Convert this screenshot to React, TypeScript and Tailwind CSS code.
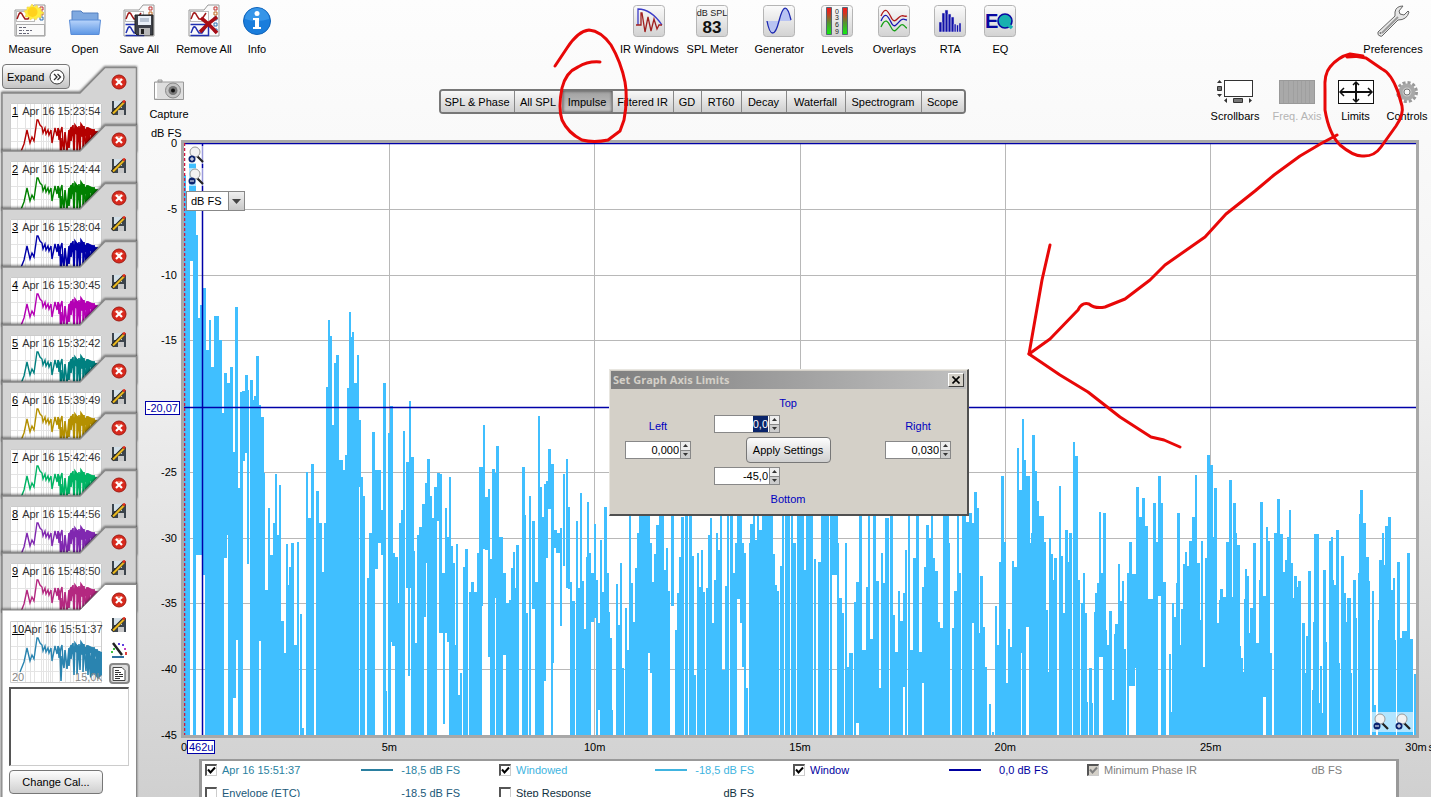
import React, { useEffect, useRef, useState } from 'react';

interface ToolItem {
  label: string;
  icon: React.ReactNode;
  width: string;
  disabled?: boolean;
}

interface Measurement {
  id: number;
  time: string;
  color: string;
  height: string;
}

interface Trace {
  label: string;
  color: string;
  line: string;
  value: string;
  checked: boolean;
  disabled?: boolean;
}

/* ---------- icons ---------- */

const TracePage: React.FC<{ children?: React.ReactNode; rows?: boolean }> = ({ children, rows }) => (
  <svg width="34" height="34" viewBox="0 0 34 34" fill="none">
    <path d="M2 6H17L21 1H32V32H2Z" fill="#fafafa" stroke="#999" />
    <rect x="3.500" y="7.500" width="18" height="10" fill="#fff" stroke="#bbb" />
    <path d="M4 15l2-5q2-3 4 2l2 3 3 0 4-6" stroke="#a01818" strokeWidth="1.500" />
    {rows ? (
      <>
        <path d="M3.500 20.500h28v11h-28z" stroke="#aaa" />
        <path d="M6 23.500h7M6 26.500h5M13 26.500h6M6 29.500h10" stroke="#667" strokeDasharray="3 1" />
      </>
    ) : (
      <path d="M3.500 20.500h18v11h-18M4 29l2-5q2-3 4 2l2 3 3 0 4-6" stroke="#2030b0" strokeWidth="1.500" />
    )}
    <path d="M27 3h3v3h-3z" stroke="#c03030" />
    <path d="M27 8h3v3h-3z" stroke="#c06820" />
    <path d="M27 13h3v3h-3z" stroke="#3070b0" />
    {!rows && <path d="M27 19h3v3h-3zM27 25h3v3h-3z" stroke="#3070b0" />}
    {children}
  </svg>
);

const MeasureIcon = () => (
  <TracePage rows>
    <path
      d="M19 0l2 3 3-2 1 3 3 0 0 3 3 2-3 1 0 4-3-1-2 3-3-2-3 2-1-3-4 0 1-3-2-3 3-1 0-3 3 0z"
      fill="#ffee40"
      stroke="#f0d050"
      strokeWidth="0.600"
    />
    <circle cx="19.500" cy="8" r="5" fill="#ffd21c" />
  </TracePage>
);

const SaveAllIcon = () => (
  <TracePage>
    <path d="M13 11h18v20H15l-2-2z" fill="#3d4048" stroke="#222" />
    <path d="M16 12h13v9H16z" fill="#eaf0f8" />
    <path d="M18 15h9M18 17h9" stroke="#8a9ab0" />
    <path d="M17 24h11v7H17z" fill="#b8b8b8" />
    <path d="M19 25h3v5h-3z" fill="#222" />
  </TracePage>
);

const RemoveAllIcon = () => (
  <TracePage>
    <path d="M14 14q7 5 16 15M30 13q-9 6-17 15" stroke="#a80c14" strokeWidth="3.500" />
  </TracePage>
);

const FolderIcon = () => (
  <svg width="34" height="34" viewBox="0 0 34 34">
    <defs>
      <linearGradient id="folder" x1="0" y1="0" x2="0" y2="1">
        <stop offset="0" stopColor="#b8d4fb" />
        <stop offset="1" stopColor="#5c96e4" />
      </linearGradient>
    </defs>
    <path d="M4 20V7h9l2 2h15v11z" fill="#7fa9e0" stroke="#5580c0" />
    <path d="M1.500 16h31L31 30.500H3z" fill="url(#folder)" stroke="#5a8dd8" />
  </svg>
);

const InfoIcon = () => (
  <svg width="34" height="34" viewBox="0 0 34 34">
    <circle cx="17" cy="17" r="13.500" fill="#1a7ddc" stroke="#0f62b8" />
    <path d="M5 15a12 11 0 0 1 24 0q-12 4-24 0" fill="#4aa5f0" opacity="0.600" />
    <circle cx="17" cy="9.500" r="2.500" fill="#fff" />
    <path d="M13 14h6v9h2v2h-8v-2h2v-7h-2z" fill="#fff" />
  </svg>
);

const Tile: React.FC<{ children: React.ReactNode }> = ({ children }) => (
  <svg width="34" height="34" viewBox="0 0 34 34" fill="none">
    <defs>
      <linearGradient id="tile" x1="0" y1="0" x2="0" y2="1">
        <stop offset="0" stopColor="#fbfbfb" />
        <stop offset="1" stopColor="#d2d2d2" />
      </linearGradient>
    </defs>
    <rect x="1.500" y="1.500" width="31" height="31" rx="3" fill="url(#tile)" stroke="#b5b5b5" />
    {children}
  </svg>
);

const WindowsIcon = () => (
  <Tile>
    <path d="M6 21V5q13 0 24 16" stroke="#3c3cc8" strokeWidth="1.300" />
    <path d="M4 21h5V9h1l3 19 3-15 3 14 3-12 3 10 2-4h3" stroke="#a02020" strokeWidth="1.300" />
  </Tile>
);

const SplIcon = () => (
  <Tile>
    <text x="17" y="12" textAnchor="middle" fontSize="9" fill="#222" fontFamily="Liberation Sans, sans-serif">
      dB SPL
    </text>
    <text x="17" y="29" textAnchor="middle" fontSize="17" fontWeight="bold" fill="#111" fontFamily="Liberation Sans, sans-serif">
      83
    </text>
  </Tile>
);

const GeneratorIcon = () => (
  <Tile>
    <path d="M5 17c3 16 8 16 12 0z M17 17C21 0 26 0 29 17z" fill="#b9c4f2" />
    <path d="M5 17c3 16 8 16 12 0s8-18 12-1" stroke="#1c28b0" strokeWidth="1.300" />
  </Tile>
);

const LevelsIcon = () => (
  <Tile>
    <defs>
      <linearGradient id="level" x1="0" y1="0" x2="0" y2="1">
        <stop offset="0" stopColor="#f81818" />
        <stop offset="0.200" stopColor="#d83020" />
        <stop offset="0.550" stopColor="#589030" />
        <stop offset="1" stopColor="#10f010" />
      </linearGradient>
    </defs>
    <path d="M6.500 3.500h5v27h-5zM22.500 3.500h5v27h-5z" fill="url(#level)" stroke="#567" />
    <g fontSize="7" fill="#222" fontFamily="Liberation Sans, sans-serif">
      <text x="15" y="10">0</text>
      <text x="15" y="16">3</text>
      <text x="15" y="23">6</text>
      <text x="15" y="30">9</text>
    </g>
  </Tile>
);

const OverlaysIcon = () => (
  <Tile>
    <g strokeWidth="1.300">
      <path d="M4 12c5-12 8-2 11 3s6-2 9-3 4 1 6 0" stroke="#b01818" />
      <path d="M4 17c5-12 8-2 11 3s6-2 9-4 4 0 6 0" stroke="#1818b0" />
      <path d="M4 23c5-12 8-3 11 2s6-2 9-4 4 3 6 3" stroke="#18a018" />
    </g>
  </Tile>
);

const RtaIcon = () => (
  <Tile>
    <path
      d="M6 28V18h3v10zM9 28V9h3v19zM12 28V6h3v22zM15 28V10h3v18zM18 28V13h3v15zM21 28V20h2v8zM23.500 28V21h2v7zM26 28V19h2v9z"
      fill="#1010a8"
      stroke="#dde"
      strokeWidth="0.500"
    />
  </Tile>
);

const EqIcon = () => (
  <Tile>
    <text x="2" y="24" fontSize="20" fontWeight="bold" fill="#0808a0" fontFamily="Liberation Sans, sans-serif">
      E
    </text>
    <circle cx="22" cy="17" r="7" fill="#18b0b0" stroke="#0808a0" strokeWidth="1.600" />
    <path d="M22 18l7 6" stroke="#18b0b0" strokeWidth="3.500" />
  </Tile>
);

const WrenchIcon = () => (
  <svg width="34" height="34" viewBox="0 0 34 34">
    <path
      d="M27 2q-7 0-8 6v4L2 28q-1 3 2 4 2 1 3-1L22 16q9 0 11-8l-1-1-4 4-4-1-1-3z"
      fill="#e6e6e6"
      stroke="#666"
    />
    <path d="M6 29L22 13" stroke="#999" strokeWidth="2" />
    <circle cx="4.500" cy="29" r="1" fill="#777" />
  </svg>
);

const CameraIcon = () => (
  <svg width="32" height="24" viewBox="0 0 32 24">
    <path d="M5 2h4v2H5zM1.500 4h29v17.500h-29z" fill="#dedede" stroke="#999" />
    <path d="M3 5v15" stroke="#fff" strokeWidth="2" />
    <circle cx="20" cy="12.500" r="7.500" fill="#c4c4c4" stroke="#888" />
    <circle cx="20" cy="12.500" r="4.500" fill="#777" />
    <circle cx="20" cy="12.500" r="2" fill="#111" />
  </svg>
);

const ScrollbarsIcon = () => (
  <svg width="36" height="24" viewBox="0 0 36 24">
    <rect x="7.500" y="0.500" width="28" height="16" fill="#fff" stroke="#333" />
    <path d="M0 3h5L2.500 0zM0 14h5l-2.500 3zM10 18v5l-3-2.500zM32 18v5l3-2.500z" fill="#333" />
    <path d="M.5 6.500h4v4h-4zM16.500 18.500h9v4h-9z" fill="#777" stroke="#333" />
  </svg>
);

const FreqAxisIcon = () => (
  <svg width="36" height="24" viewBox="0 0 36 24">
    <rect x="0.500" y="0.500" width="35" height="23" fill="#a9a9a9" stroke="#999" />
    <path d="M4.500 1v22M9.500 1v22M14.500 1v22M18.500 1v22M22.500 1v22M26.500 1v22M30.500 1v22" stroke="#9f9f9f" />
  </svg>
);

const LimitsIcon = () => (
  <svg width="36" height="24" viewBox="0 0 36 24" fill="none" stroke="#111">
    <rect x="0.500" y="0.500" width="35" height="23" fill="#fff" />
    <path d="M2 12h32M18 2v20" strokeWidth="2" />
    <path d="M6 8l-4 4 4 4M30 8l4 4-4 4M15 5l3-3 3 3M15 19l3 3 3-3" strokeWidth="1.500" />
  </svg>
);

const GearIcon = () => (
  <svg width="24" height="24" viewBox="0 0 24 24" fill="none">
    <circle cx="12" cy="12" r="9.500" stroke="#999" strokeWidth="3" strokeDasharray="3 2" />
    <circle cx="12" cy="12" r="6.500" fill="#c8c8c8" stroke="#a8a8a8" strokeWidth="4" />
    <circle cx="12" cy="12" r="3" fill="#f8f8f8" stroke="#777" />
  </svg>
);

const CloseIcon = () => (
  <svg width="16" height="16" viewBox="0 0 16 16">
    <circle cx="8" cy="8" r="7" fill="#d8281c" stroke="#a01c14" />
    <path d="M3 6a6 5 0 0 1 10 0q-5 2-10 0" fill="#f08870" opacity="0.700" />
    <path d="M5 5l6 6M11 5l-6 6" stroke="#fff" strokeWidth="2.200" />
  </svg>
);

const DiskPenIcon = () => (
  <svg width="16" height="16" viewBox="0 0 16 16">
    <path d="M1 1h14v14H3l-2-2z" fill="#3c444c" />
    <path d="M3 1h8v7H3z" fill="#d4e0e8" />
    <path d="M7 10h6v5H7z" fill="#c8c8c8" />
    <path d="M1 14L13 2" stroke="#222" strokeWidth="3.500" />
    <path d="M2 13.500L13 2.500" stroke="#e8b820" strokeWidth="2.200" />
    <path d="M12 2.500l2-2" stroke="#e03020" strokeWidth="2.500" />
  </svg>
);

const ColorPenIcon = () => (
  <svg width="16" height="16" viewBox="0 0 16 16" fill="none">
    <path d="M1 15h12" stroke="#3070a0" strokeWidth="2" />
    <path d="M2 1l9 12" stroke="#222" strokeWidth="2.500" />
    <path d="M1 9v2M3 6v2" stroke="#40c040" strokeWidth="2" />
    <path d="M7 2h2M11 3h2" stroke="#6040e0" strokeWidth="2" />
    <path d="M14 6v2" stroke="#c040c0" strokeWidth="2" />
    <path d="M15 10v3" stroke="#e04040" strokeWidth="2" />
  </svg>
);

const NotesIcon = () => (
  <svg width="14" height="14" viewBox="0 0 14 14" fill="none">
    <path d="M1 .5h9l3 3v10H1z" fill="#fff" stroke="#444" />
    <path d="M3 3.500h4M3 5.500h6M3 7.500h3M7 7.500h4M3 9.500h8M3 11.500h5" stroke="#333" />
  </svg>
);

const Magnifier: React.FC<{ plus?: boolean }> = ({ plus }) => (
  <svg width="18" height="18" viewBox="0 0 18 18">
    <path d="M10 10l6 6" stroke="#222" strokeWidth="2.200" />
    <circle cx="8" cy="6" r="5" fill="#f2f2f2" stroke="#999" />
    <circle cx="5" cy="13" r="3.500" fill="#0c2470" />
    <path d={plus ? 'M3 13h4M5 11v4' : 'M3 13h4'} stroke="#fff" />
  </svg>
);

/* ---------- data ---------- */

const FILE_TOOLS: ToolItem[] = [
  { label: 'Measure', icon: <MeasureIcon />, width: 'w-[60px]' },
  { label: 'Open', icon: <FolderIcon />, width: 'w-[50px]' },
  { label: 'Save All', icon: <SaveAllIcon />, width: 'w-[58px]' },
  { label: 'Remove All', icon: <RemoveAllIcon />, width: 'w-[72px]' },
  { label: 'Info', icon: <InfoIcon />, width: 'w-[34px]' },
];

const WINDOW_TOOLS: ToolItem[] = [
  { label: 'IR Windows', icon: <WindowsIcon />, width: 'w-[66px]' },
  { label: 'SPL Meter', icon: <SplIcon />, width: 'w-[60px]' },
  { label: 'Generator', icon: <GeneratorIcon />, width: 'w-[74px]' },
  { label: 'Levels', icon: <LevelsIcon />, width: 'w-[42px]' },
  { label: 'Overlays', icon: <OverlaysIcon />, width: 'w-[72px]' },
  { label: 'RTA', icon: <RtaIcon />, width: 'w-[40px]' },
  { label: 'EQ', icon: <EqIcon />, width: 'w-[60px]' },
];

const GRAPH_TOOLS: ToolItem[] = [
  { label: 'Scrollbars', icon: <ScrollbarsIcon />, width: 'w-[62px]' },
  { label: 'Freq. Axis', icon: <FreqAxisIcon />, width: 'w-[62px]', disabled: true },
  { label: 'Limits', icon: <LimitsIcon />, width: 'w-[55px]' },
  { label: 'Controls', icon: <GearIcon />, width: 'w-[48px]' },
];

const GRAPH_TABS = [
  { name: 'SPL & Phase', width: 'w-[74px]' },
  { name: 'All SPL', width: 'w-[48px]' },
  { name: 'Impulse', width: 'w-[50px]' },
  { name: 'Filtered IR', width: 'w-[61px]' },
  { name: 'GD', width: 'w-[28px]' },
  { name: 'RT60', width: 'w-[40px]' },
  { name: 'Decay', width: 'w-[45px]' },
  { name: 'Waterfall', width: 'w-[59px]' },
  { name: 'Spectrogram', width: 'w-[76px]' },
  { name: 'Scope', width: 'w-[42px]' },
];

const MEASUREMENTS: Measurement[] = [
  { id: 1, time: '15:23:54', color: '#b40000', height: 'h-[58px]' },
  { id: 2, time: '15:24:44', color: '#008000', height: 'h-[58px]' },
  { id: 3, time: '15:28:04', color: '#0000a8', height: 'h-[58px]' },
  { id: 4, time: '15:30:45', color: '#b400b4', height: 'h-[58px]' },
  { id: 5, time: '15:32:42', color: '#008080', height: 'h-[57px]' },
  { id: 6, time: '15:39:49', color: '#b49000', height: 'h-[57px]' },
  { id: 7, time: '15:42:46', color: '#00b464', height: 'h-[57px]' },
  { id: 8, time: '15:44:56', color: '#8028b0', height: 'h-[57px]' },
  { id: 9, time: '15:48:50', color: '#b42880', height: 'h-[57px]' },
];

const TRACES: Trace[] = [
  { label: 'Apr 16 15:51:37', color: 'text-[#2a7fa0]', line: 'bg-[#2a7fa0]', value: '-18,5 dB FS', checked: true },
  { label: 'Windowed', color: 'text-[#40b4e0]', line: 'bg-[#40b4e0]', value: '-18,5 dB FS', checked: true },
  { label: 'Window', color: 'text-[#0000a0]', line: 'bg-[#0000a0]', value: '0,0 dB FS', checked: true },
  { label: 'Minimum Phase IR', color: 'text-[#808080]', line: '', value: 'dB FS', checked: true, disabled: true },
  { label: 'Envelope (ETC)', color: 'text-[#205878]', line: '', value: '-18,5 dB FS', checked: false },
  { label: 'Step Response', color: 'text-[#103040]', line: '', value: 'dB FS', checked: false },
];

// Impulse response bars: x, width, top and (optionally) bottom, on a 1232 x 592 plot
const IMPULSE = `
0 2 32;2 4 48;5 5 20 118;9 3 20;11 3 92 412;14 2 175 412;16 2 162 412;19 3 145 432;21 4 207;25 2 177;27 3 224;30 5 173;35 3 197;38 2 270;40 3 230 415;
43 2 240 392;44 3 240;46 3 224;49 3 309 555;51 3 164 497;54 3 345;56 3 249;58 3 248 318;61 3 232 310;63 2 247 421;66 3 237;68 3 257;70 3 253 592;
72 3 213;75 2 262 498;77 3 274;79 2 330;81 3 447;84 2 365;86 3 412;89 2 380;91 2 331;93 2 392;95 2 342;97 3 478;100 2 510;102 2 401;104 2 442;
105 2 424;107 3 400;110 3 502;113 2 399;116 2 471;118 2 585;122 2 329;124 3 375;127 3 321;132 3 348;135 3 380;138 2 429;140 2 380;142 2 244;
144 2 177;146 2 193;148 2 282;150 2 220;152 3 212;155 4 317;159 2 327;161 3 312;163 2 245;165 2 169;167 2 194;168 2 189;170 3 240;173 2 212;
175 2 277 344;176 3 334;179 2 353;183 3 435;185 3 390;188 3 289;191 3 327 426;194 3 327 400;197 2 367 412;199 3 240;201 2 548;204 3 290;
206 3 263 499;208 3 410 503;211 3 414;213 2 460;215 3 380;217 2 367;219 2 288;222 2 319 445;224 2 319 533;225 2 258 445;227 3 314;229 2 408;
231 2 500;233 2 392;235 3 384;238 2 361;239 3 361 474;241 2 340 420;243 3 316;246 2 353;248 3 375;250 3 344;253 3 330 378;255 3 331 490;
257 3 430 490;259 2 430 581;261 2 365 490;263 2 394 499;265 2 334;267 2 403;269 2 420;271 1 502;272 2 401;274 2 552;276 2 530;279 2 424;
281 3 406;285 2 449;287 3 439;290 3 449;293 2 410;295 3 324;297 2 324 463;299 2 282 406;301 3 354 407;304 2 346 514;306 2 416;308 3 326;
310 2 330 455;312 3 303;315 4 394;319 3 430 512;322 3 460;325 2 457;327 2 425;329 2 409;330 2 445;332 3 402;338 3 324;340 2 372;342 2 470;
345 2 353;348 3 378 466;351 3 439;354 2 273;356 2 344;358 2 374;360 2 341 538;362 2 338 415;364 3 306 366;367 2 321;368 2 321 520;370 3 387 405;
372 4 390 410;376 2 385 483;379 2 331 423;382 2 316 445;384 2 364 446;386 2 439;388 3 458;392 2 378;394 2 445;396 2 350;398 2 438;400 2 486;
402 2 414;403 2 359;405 2 410;407 3 430 479;410 2 381 475;412 2 437;414 2 480 567;416 2 397;418 2 449;420 3 364;423 2 430;424 2 469;
426 2 495;428 1 567;432 2 441;434 2 482;436 2 420;438 2 525;441 2 465;443 2 507;445 2 372;
447 2 440;449 2 479;451 2 425;453 2 390;455 9 366;464 2 366 510;466 2 400 530;468 2 439;470 2 411;472 3 382;475 5 373;480 2 427;482 2 405;
484 2 448;487 3 372 463;491 2 487;493 2 450;495 2 414;497 3 374;501 3 373;505 3 373;508 2 413;510 2 532;513 2 410;515 2 444;517 2 407;519 2 449;
522 2 445;524 2 392;526 2 375;528 2 480;530 2 437;532 2 390;534 2 407;536 2 373;538 3 527;541 2 443;543 2 373;546 3 373;549 2 430;551 2 400;
553 3 373 456;556 2 373 480;558 2 400 524;560 2 410;562 2 545;565 2 400;566 3 381;569 2 373;571 2 397;573 2 373;575 3 387;578 11 373;589 2 411;
591 2 442;593 2 448;596 2 423;598 2 373;601 5 373;607 2 373;609 3 400;613 7 373;620 2 427;622 7 373;630 2 416;634 3 419;637 2 373;639 6 373;
646 2 373;648 6 373 432;653 2 400;655 3 455;658 2 470;661 2 400;663 2 524;665 4 510;670 2 459;672 3 439 580;675 3 373;678 4 507;682 2 444;
684 2 373;686 3 496;689 3 373;692 3 438;695 2 545;697 2 410;699 2 440;701 4 375;706 3 373;709 2 472;711 3 509;714 2 448;716 3 478;719 2 450 544;
721 2 407;724 2 373;726 3 507;729 3 415;732 3 373;735 3 509;738 3 444 540;740 2 424;742 3 382;745 2 395;747 2 373;749 2 415;751 3 428;754 2 479;
756 3 485;759 6 373;764 2 400;768 2 485;770 3 448;773 2 373;775 2 430;778 4 373;782 3 379;785 3 370;788 2 380 480;790 3 349;793 2 365;795 2 490;
796 3 433;799 2 484;801 2 524;805 2 561;808 2 589;811 2 463;813 2 502;815 2 419;817 3 333;820 2 399;822 2 540;824 2 486;826 2 504;828 2 418;
830 3 424;833 2 305;835 2 347;836 3 347 510;838 2 276;840 2 317;842 4 333 484;845 2 400;847 2 390;848 3 292;851 2 328;853 2 358;855 5 373;
860 2 399;862 2 467;864 1 529;865 2 395;867 2 411;869 2 437;870 3 415;875 2 343;877 2 413;879 3 470;881 3 387;884 2 419;885 3 390;889 2 299;
891 3 313;894 2 437;897 2 460;899 2 430;901 2 470;903 1 559;905 3 525;908 1 560;910 2 469;911 2 450;913 2 440;915 2 369 514;917 2 430 514;
919 3 370;922 1 487;923 2 502;925 3 468;928 2 557;930 2 491;931 3 481;934 2 421;936 2 458;938 2 438;940 2 506;943 2 430;945 3 399 543;947 4 431 543;
950 3 431 525;952 3 344;955 3 374;958 3 355;961 3 383;964 5 456;969 3 360;972 2 399;974 3 333 453;977 2 360;978 4 439;985 2 511;987 1 569;
988 2 460;990 2 474;992 1 440;993 3 370;996 1 502;997 2 466;999 2 421;1001 2 409;1003 2 423;1005 3 398;1008 3 374;1011 2 332;1013 3 420;
1016 1 477;1017 2 398;1019 2 524;1021 2 415;1023 3 312;1026 3 322;1029 1 394;1030 3 345;1033 2 480;1035 1 457;1036 3 446;1039 3 454;1042 3 399;
1045 3 337;1048 1 454;1049 3 360;1052 1 390;1053 3 402;1056 1 503;1057 2 515;1059 1 529;1060 2 456;1061 2 426;1063 2 433;1065 1 490;1066 3 465;
1069 3 400;1072 3 500;1075 1 437;1076 3 359;1079 3 453 554;1082 2 384;1084 2 398;1086 2 510;1090 3 390;1093 3 356;1096 3 391;1099 2 429;
1101 2 417;1103 2 394;1105 2 367;1107 2 420;1109 1 455;1110 3 433;1113 1 444;1114 3 438;1118 3 480;1121 1 530;1122 2 493;1124 3 428;1128 1 547;
1129 1 479;1130 5 391;1135 1 560;1136 2 523;1138 1 570;1139 3 427;1142 1 499;1145 2 398;1147 2 394;1149 1 437;1150 2 442;1152 3 387;1155 1 520;
1157 3 413;1160 2 450;1162 1 479;1163 4 455;1167 1 530;1169 3 437;1172 1 475;1174 1 430;1175 2 371;1176 3 347;1179 3 380;1182 3 414;1185 1 438;
1188 2 448;1190 2 562;1194 1 477;1195 3 417;1198 2 390;1200 1 422;1201 3 383;1204 3 374;1207 2 447;1209 2 435;1211 1 497;1213 3 419;1216 2 495;
1218 5 488;1223 3 410;1226 3 496;1230 2 531`;

const impulsePath = IMPULSE.trim()
  .split(';')
  .map((bar) => {
    const [x, w, top, bottom = 592] = bar.trim().split(/\s+/).map(Number);
    return `M${x} ${top}h${w}V${bottom}h-${w}z`;
  })
  .join('');

/* ---------- components ---------- */

const ToolButton: React.FC<{ item: ToolItem; box?: string }> = ({ item, box = 'h-8' }) => (
  <button
    disabled={item.disabled}
    className={`${item.width} flex shrink-0 flex-col items-center gap-1 whitespace-nowrap disabled:text-[#b4b4b4]`}
  >
    <span className={`${box} flex items-center`}>{item.icon}</span>
    <span className="leading-4">{item.label}</span>
  </button>
);

const Thumbnail: React.FC<{ color: string }> = ({ color }) => (
  <svg className="absolute inset-0" width="92" height="62" viewBox="0 0 92 62" fill="none">
    <path d="M0 0h92v62H0z" fill="#fff" />
    <path d="M7.500 0v62M15.500 0v62M20.500 0v62M24.500 0v62M31.500 0v62M33.500 0v62M36.500 0v62M38.500 0v62M40.500 0v62M42.500 0v62M49.500 0v62M55.500 0v62M60.500 0v62M63.500 0v62M66.500 0v62M75.500 0v62M83.500 0v62M0 25.500h92M0 38.500h92M0 50.500h92" stroke="#e4e4e4" />
    <path d="M.5.5h91v61H.5z" stroke="#ccc" />
    <path
      d="M10 51l4-10 3-14 3 13 2-6 2 4 3-21 1 0 2 5 2 2 1 6 2-5 1 6 2-4 1 5 2-5 1 13 2-10 1-5 2 8 1-8 1 12 2-10 1-3 1 16"
      stroke={color}
      strokeWidth="1.400"
    />
    <path
      d="M48 25l2 5 1 30 1-25 2 12 1-18 2 19 2-21 0 18 2-21 0 14 2-16 1 32 1-32 2 3 0 28 2-30 1 26 1-28 2 3 0 27 1-28 2 27 1-26 1 30 1-29 2 22 1-21 1 26 1-26 2 28 1-26 1 28 1-26"
      stroke={color}
      strokeWidth="1.600"
    />
    <path d="M59 27l3-4 2 3 2-3 3 2 3-2 3 3 3-2 6 3 5 3 3 1v8l-5-2-6-5-9 2-7-3z" fill={color} />
    <path d="M78 38h14v16l-4 4-4-5-4 4z" fill={color} />
  </svg>
);

const MeasurementTab: React.FC<{ item: Measurement }> = ({ item }) => (
  <li className={`relative ${item.height}`}>
    <svg className="absolute inset-0 drop-shadow-[0_-1px_1px_rgba(0,0,0,0.5)]" width="137" height="86" viewBox="0 0 137 86">
      <path d="M2 86V26H80L105 .5H136.500V86z" fill="#d4d4d4" stroke="#888" strokeWidth="1.500" />
    </svg>
    <div className="relative flex h-[84px] items-start pl-[10px]">
      <div className="relative mt-9 h-12 w-[92px] overflow-hidden">
        <Thumbnail color={item.color} />
        <div className="relative flex gap-1 pl-[2px] text-[#333]">
          <span className="text-black underline">{item.id}</span>
          <span className="whitespace-nowrap">Apr 16 {item.time}</span>
        </div>
      </div>
      <div className="flex flex-1 flex-col items-center gap-[10px] pt-[7px] pr-[2px]">
        <button aria-label={`Delete measurement ${item.id}`}><CloseIcon /></button>
        <button aria-label={`Save measurement ${item.id}`}><DiskPenIcon /></button>
      </div>
    </div>
  </li>
);

const ActiveMeasurement = () => (
  <section className="relative flex-1">
    <svg className="absolute inset-x-0 top-0 drop-shadow-[0_-1px_1px_rgba(0,0,0,0.5)]" width="137" height="900" viewBox="0 0 137 900">
      <path d="M2 900V26H80L105 .5H136.500V900z" fill="#fff" stroke="#888" />
    </svg>
    <div className="relative flex items-start pl-[10px]">
      <div className="relative mt-[37px] h-[62px] w-[92px]">
        <Thumbnail color="#2a84b0" />
        <div className="relative flex h-full flex-col justify-between pl-[2px] text-[#333]">
          <div className="whitespace-nowrap"><span className="text-black underline">10</span>Apr 16 15:51:37</div>
          <div className="flex justify-between leading-3 text-[#888]"><span>20</span><span>15,0k</span></div>
        </div>
      </div>
      <div className="flex flex-1 flex-col items-center gap-[9px] pt-[8px] pr-[2px]">
        <button aria-label="Delete measurement 10"><CloseIcon /></button>
        <button aria-label="Save measurement 10"><DiskPenIcon /></button>
        <button aria-label="Trace colour"><ColorPenIcon /></button>
        <button aria-label="Notes" className="-mt-1 flex h-[21px] w-[21px] items-center justify-center rounded border-2 border-[#888] bg-[#ddd]">
          <NotesIcon />
        </button>
      </div>
    </div>
    <div className="relative flex flex-col items-start gap-1 pt-[3px] pl-[9px]">
      <textarea
        aria-label="Measurement notes"
        className="h-[79px] w-[120px] resize-none border-t-2 border-r border-b border-l-2 border-t-[#555] border-r-[#ccc] border-b-[#ccc] border-l-[#555] bg-white"
      />
      <button className="h-6 w-[94px] rounded border border-[#777] bg-linear-to-b from-[#fdfdfd] to-[#cfcfcf]">Change Cal...</button>
    </div>
  </section>
);

const Spinner: React.FC<{ label: string; initial: string; selected?: boolean }> = ({ label, initial, selected }) => {
  const [value, setValue] = useState(initial);
  const ref = useRef<HTMLInputElement>(null);

  useEffect(() => {
    if (selected && ref.current) {
      ref.current.focus();
      ref.current.select();
    }
  }, [selected]);

  return (
    <span className="flex h-[18px] w-[66px] border border-[#888] bg-white text-black">
      <input
        ref={ref}
        aria-label={label}
        value={value}
        onChange={(e) => setValue(e.target.value)}
        className="w-0 flex-1 pr-[1px] text-right outline-none selection:bg-[#0a246a] selection:text-white"
      />
      <span className="flex w-[10px] flex-col border-l border-[#888]">
        <button aria-label={`${label} up`} className="flex flex-1 items-center justify-center border-b border-[#888] bg-[#eee]">
          <svg width="5" height="3" viewBox="0 0 5 3"><path d="M0 3h5L2.500 0z" fill="#333" /></svg>
        </button>
        <button aria-label={`${label} down`} className="flex flex-1 items-center justify-center bg-[#ccc]">
          <svg width="5" height="3" viewBox="0 0 5 3"><path d="M0 0h5L2.500 3z" fill="#333" /></svg>
        </button>
      </span>
    </span>
  );
};

const LimitsDialog = () => (
  <div
    role="dialog"
    aria-label="Set Graph Axis Limits"
    className="absolute top-[369px] left-[609px] h-[147px] w-[360px] border-t border-r-2 border-b-2 border-l border-t-[#e8e6e0] border-r-[#505050] border-b-[#505050] border-l-[#e8e6e0] bg-[#d4d0c8] p-[1px] text-[#0000c0]"
  >
    <div className="flex h-[18px] items-center justify-between bg-linear-to-r from-[#808080] to-[#c0c0c0] pr-[2px] pl-[2px]">
      <h2 className="font-['Open_Sans',sans-serif] text-[11px] leading-4 font-bold text-[#d4d0c8]">Set Graph Axis Limits</h2>
      <button
        aria-label="Close"
        className="flex h-[14px] w-4 items-center justify-center border border-t-white border-r-[#404040] border-b-[#404040] border-l-white bg-[#d4d0c8]"
      >
        <svg width="8" height="8" viewBox="0 0 8 8"><path d="M.5.5l7 7M7.500.5l-7 7" stroke="#000" strokeWidth="1.600" /></svg>
      </button>
    </div>
    <div className="flex items-start justify-between pr-[15px] pl-[14px]">
      <div className="flex flex-col items-center gap-[7px] pt-[29px]">
        <span className="leading-4">Left</span>
        <Spinner label="Left" initial="0,000" />
      </div>
      <div className="flex w-[148px] flex-col items-center gap-1 pt-[6px]">
        <span className="leading-4">Top</span>
        <span className="self-start"><Spinner label="Top" initial="0,0" selected /></span>
        <button className="h-[26px] w-[85px] rounded border border-[#777] bg-linear-to-b from-[#fdfdfd] to-[#cfcfcf] text-black">Apply Settings</button>
        <span className="self-start"><Spinner label="Bottom" initial="-45,0" /></span>
        <span className="leading-5">Bottom</span>
      </div>
      <div className="flex flex-col items-center gap-[7px] pt-[29px]">
        <span className="leading-4">Right</span>
        <Spinner label="Right" initial="0,030" />
      </div>
    </div>
  </div>
);

const Graph = () => (
  <div className="relative min-h-0 flex-1 border-3 border-[#a8a8a8] bg-white">
    <svg className="absolute inset-0 h-full w-full" viewBox="0 0 1232 592" preserveAspectRatio="none">
      <path
        d="M205.500 0V592M410.500 0V592M616.500 0V592M821.500 0V592M1026.500 0V592M0 66.500H1232M0 132.500H1232M0 197.500H1232M0 329.500H1232M0 395.500H1232M0 460.500H1232M0 526.500H1232"
        stroke="#b8b8b8"
      />
      <path d={impulsePath} fill="#40bfff" />
      <path d="M0 .5H1232M0 264.500H1232M18.500 0V592" stroke="#0000a8" strokeWidth="1.500" />
      <path d="M.5 0V592" stroke="#d01840" strokeWidth="1.500" strokeDasharray="3 2" />
    </svg>
    <div className="relative flex flex-col items-start gap-1 pt-[3px] pl-[2px]">
      <button aria-label="Zoom in vertical" className="ml-[1px] bg-white/60"><Magnifier plus /></button>
      <button aria-label="Zoom out vertical" className="ml-[1px] bg-white/60"><Magnifier /></button>
      <div className="relative mt-[1px] h-5 w-[59px] border border-[#888] bg-white">
        <select aria-label="Y axis unit" className="h-full w-full appearance-none bg-white pl-[4px] outline-none">
          <option>dB FS</option>
          <option>%</option>
        </select>
        <span className="pointer-events-none absolute inset-y-0 right-0 flex w-4 items-center justify-center border-l border-[#888] bg-linear-to-b from-[#f0f0f0] to-[#c8c8c8]">
          <svg width="9" height="5" viewBox="0 0 9 5"><path d="M0 0h9L4.500 5z" fill="#444" /></svg>
        </span>
      </div>
    </div>
    <div className="absolute right-[3px] bottom-[3px] flex gap-1 bg-white/60 p-[1px]">
      <button aria-label="Zoom out horizontal"><Magnifier /></button>
      <button aria-label="Zoom in horizontal"><Magnifier plus /></button>
    </div>
  </div>
);

const Legend = () => (
  <div className="mr-[32px] ml-[61px] grid h-[38px] shrink-0 grid-cols-4 content-start gap-y-[5px] overflow-hidden border-x-3 border-t-2 border-[#999] bg-white pr-[15px] pl-[3px]">
    {TRACES.map((trace) => (
      <label key={trace.label} className={`flex h-[18px] items-center pr-[39px] ${trace.color}`}>
        <span className="relative mr-[5px] h-3 w-3">
          <input
            type="checkbox"
            defaultChecked={trace.checked}
            disabled={trace.disabled}
            className="peer block h-3 w-3 appearance-none border-t-2 border-r border-b border-l-2 border-t-[#555] border-r-[#ccc] border-b-[#ccc] border-l-[#555] bg-white disabled:bg-[#d4d0c8]"
          />
          <svg
            className="pointer-events-none absolute inset-0 hidden text-black peer-checked:block peer-disabled:text-[#808080]"
            width="12"
            height="12"
            viewBox="0 0 12 12"
            fill="none"
          >
            <path d="M3 5.500l2.500 3L10 3.500" stroke="currentColor" strokeWidth="2" />
          </svg>
        </span>
        <span className="flex-1 whitespace-nowrap">{trace.label}</span>
        <span className={`h-[2px] w-8 ${trace.line}`} />
        <span className="w-[67px] text-right whitespace-nowrap">{trace.value}</span>
      </label>
    ))}
  </div>
);

const Annotations = () => (
  <svg
    className="pointer-events-none absolute inset-0 h-full w-full"
    viewBox="0 0 1431 797"
    preserveAspectRatio="none"
    fill="none"
    stroke="#e80808"
    strokeWidth="3"
    strokeLinecap="round"
    strokeLinejoin="round"
  >
    <path d="M555 66L567 48Q578 31 589 30Q601 31 611 45Q621 62 625 82Q628 98 624 120L620 131L608 140Q594 143 582 140Q568 133 562 120Q558 108 562 88Q566 72 578 67Q588 61 600 62" />
    <path d="M1347 57L1363 56L1350 54Q1338 57 1330 67Q1324 74 1325 90L1325 110Q1329 134 1340 145Q1353 156 1362 156Q1374 157 1381 147L1396 126Q1404 114 1402 106L1398 92Q1391 73 1382 69L1366 58L1348 55" />
    <path d="M1337 135L1322 143L1300 156L1274 175L1255 191L1226 214L1205 237L1165 265L1150 280L1125 299L1105 307Q1095 309 1089 304Q1082 302 1078 310L1050 339L1029 354" />
    <path d="M1050 245L1042 280L1029 354L1060 375L1088 392L1120 417L1151 437L1164 440L1180 447" />
  </svg>
);

const App: React.FC = () => {
  const [tab, setTab] = useState('Impulse');

  return (
    <div className="relative flex h-screen flex-col overflow-hidden bg-linear-to-b from-[#fdfdfd] via-[#f4f4f4] via-40% to-[#d0d0d0] font-['Liberation_Sans',Arial,sans-serif] text-[11px] leading-4 text-black">
      <header className="flex h-[60px] shrink-0 items-start pt-[5px]">
        <nav className="flex w-[43%]">
          {FILE_TOOLS.map((item) => <ToolButton key={item.label} item={item} />)}
        </nav>
        <nav className="flex flex-1 pl-[1px]">
          {WINDOW_TOOLS.map((item) => <ToolButton key={item.label} item={item} />)}
        </nav>
        <ToolButton item={{ label: 'Preferences', icon: <WrenchIcon />, width: 'w-[76px]' }} />
      </header>

      <div className="flex min-h-0 flex-1">
        <aside className="flex w-[138px] shrink-0 flex-col">
          <div className="h-[7px] shrink-0 pt-1 pl-[2px]">
            <button className="flex h-[25px] w-[68px] items-center justify-between rounded border border-[#777] bg-linear-to-b from-[#fdfdfd] to-[#c4c4c4] px-1">
              Expand
              <svg width="16" height="16" viewBox="0 0 16 16" fill="none" stroke="#333">
                <circle cx="8" cy="8" r="7" fill="#fff" />
                <path d="M5 5l3 3-3 3M8.500 5l3 3-3 3" strokeWidth="1.300" />
              </svg>
            </button>
          </div>
          <ul>
            {MEASUREMENTS.map((item) => <MeasurementTab key={item.id} item={item} />)}
          </ul>
          <ActiveMeasurement />
        </aside>

        <main className="flex min-w-0 flex-1 flex-col">
          <div className="flex h-[66px] shrink-0 items-start justify-between">
            <div className="flex pt-[18px]">
              <ToolButton item={{ label: 'Capture', icon: <CameraIcon />, width: 'w-[62px]' }} box="h-6" />
            </div>
            <div role="tablist" className="mt-[29px] flex h-[25px] overflow-hidden rounded border-2 border-[#777]">
              {GRAPH_TABS.map(({ name, width }) => (
                <button
                  key={name}
                  role="tab"
                  aria-selected={tab === name}
                  onClick={() => setTab(name)}
                  className={`${width} border-r border-[#888] text-center whitespace-nowrap last:border-r-0 ${
                    tab === name
                      ? 'bg-linear-to-b from-[#a0a0a0] to-[#c8c8c8] shadow-[inset_0_0_3px_#444]'
                      : 'bg-linear-to-b from-[#f8f8f8] to-[#cfcfcf]'
                  }`}
                >
                  {name}
                </button>
              ))}
            </div>
            <div className="flex pt-5">
              {GRAPH_TOOLS.map((item) => <ToolButton key={item.label} item={item} box="h-6" />)}
            </div>
          </div>

          <div className="h-[14px] shrink-0 pl-[13px] leading-[14px]">dB FS</div>

          <div className="flex min-h-0 flex-1 pr-3">
            <div className="relative flex w-[43px] shrink-0 flex-col justify-between py-[3px] pr-[4px] text-right">
              {['0', '-5', '-10', '-15', '', '-25', '-30', '-35', '-40', '-45'].map((value, i) => (
                <span key={i} className="flex h-0 items-center justify-end">{value}</span>
              ))}
              <span className="absolute top-[44.8%] right-[1px] h-[14px] -translate-y-1/2 border border-[#0000a8] bg-white px-[1px] leading-3 text-[#0000a8]">-20,07</span>
            </div>
            <Graph />
          </div>

          <div className="relative flex h-[21px] shrink-0 justify-between pt-[1px] pr-[15px] pl-[46px]">
            {['0', '5m', '10m', '15m', '20m', '25m', '30m'].map((value) => (
              <span key={value} className="flex w-0 justify-center whitespace-nowrap">{value}</span>
            ))}
            <span className="absolute right-[-3px]">s</span>
            <span className="absolute top-[2px] left-[49px] h-[14px] border border-[#0000a8] bg-white px-[1px] leading-3 text-[#0000a8]">462u</span>
          </div>

          <Legend />
        </main>
      </div>

      <LimitsDialog />
      <Annotations />
    </div>
  );
};

export default App;
